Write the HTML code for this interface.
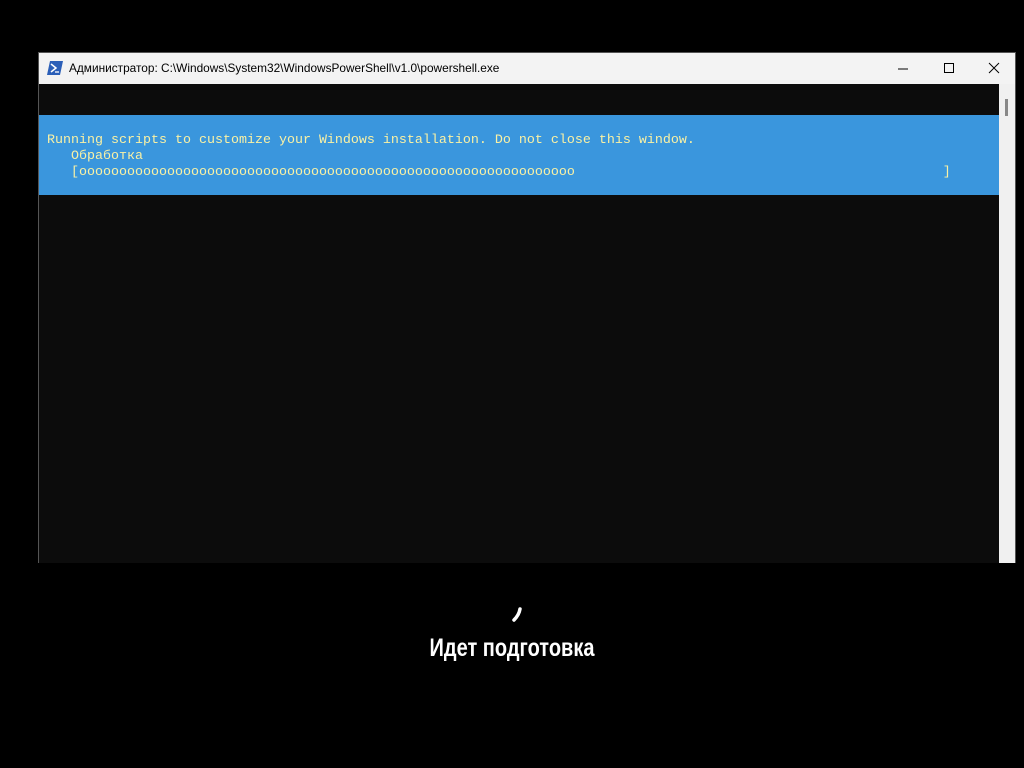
<!DOCTYPE html>
<html><head><meta charset="utf-8"><style>
body{margin:0;width:1024px;height:768px;background:#000;position:relative;overflow:hidden;font-family:"Liberation Sans",sans-serif}
.win{position:absolute;left:38px;top:52px;width:978px;height:511px;background:#f0f0f0;border:1px solid #555;box-sizing:border-box}
.tb{position:absolute;left:0;top:0;width:976px;height:31px;background:#f3f3f3;}
.title{position:absolute;left:30px;top:8px;font-size:11.85px;color:#000;white-space:nowrap}
.con{position:absolute;left:0;top:31px;width:960px;height:479px;background:#0c0c0c}
.band{position:absolute;left:0;top:31px;width:960px;height:80px;background:#3a96dd}
pre{position:absolute;left:8px;top:18px;margin:0;font-family:"Liberation Mono",monospace;font-size:13.33px;line-height:16px;color:#f9f1a5}
.sb{position:absolute;left:960px;top:31px;width:16px;height:479px;background:#f0f0f0}
.thumb{position:absolute;left:6px;top:15px;width:3px;height:17px;background:#888}
.msg{position:absolute;left:0;width:1024px;top:634px;text-align:center;color:#fff;font-size:25px;font-weight:bold;transform:scaleX(.8)}
</style></head><body>
<div class="win">
 <div class="tb">
  <svg style="position:absolute;left:8px;top:8px" width="16" height="14"><polygon points="3,0 16,0 13,14 0,14" fill="#2b5fb8"/><path d="M4 3l5 4-5 4" stroke="#fff" stroke-width="1.5" fill="none"/><path d="M8 11h4" stroke="#fff" stroke-width="1.3"/></svg>
  <div class="title">Администратор: C:\Windows\System32\WindowsPowerShell\v1.0\powershell.exe</div>
  <svg style="position:absolute;left:855px;top:8px" width="120" height="16">
   <path d="M4 8h10" stroke="#000" stroke-width="1"/>
   <rect x="50.5" y="2.5" width="9" height="9" stroke="#000" fill="none"/>
   <path d="M95 2l10 10M105 2l-10 10" stroke="#000" stroke-width="1"/>
  </svg>
 </div>
 <div class="con"><div class="band"><pre>Running scripts to customize your Windows installation. Do not close this window.
   Обработка
   [oooooooooooooooooooooooooooooooooooooooooooooooooooooooooooooo                                              ]</pre></div></div>
 <div class="sb"><div class="thumb"></div></div>
</div>
<svg style="position:absolute;left:510px;top:606px" width="14" height="20"><path d="M10 3 Q9 9 4 14" stroke="#fff" stroke-width="3.5" stroke-linecap="round" fill="none"/></svg>
<div class="msg">Идет подготовка</div>
</body></html>
